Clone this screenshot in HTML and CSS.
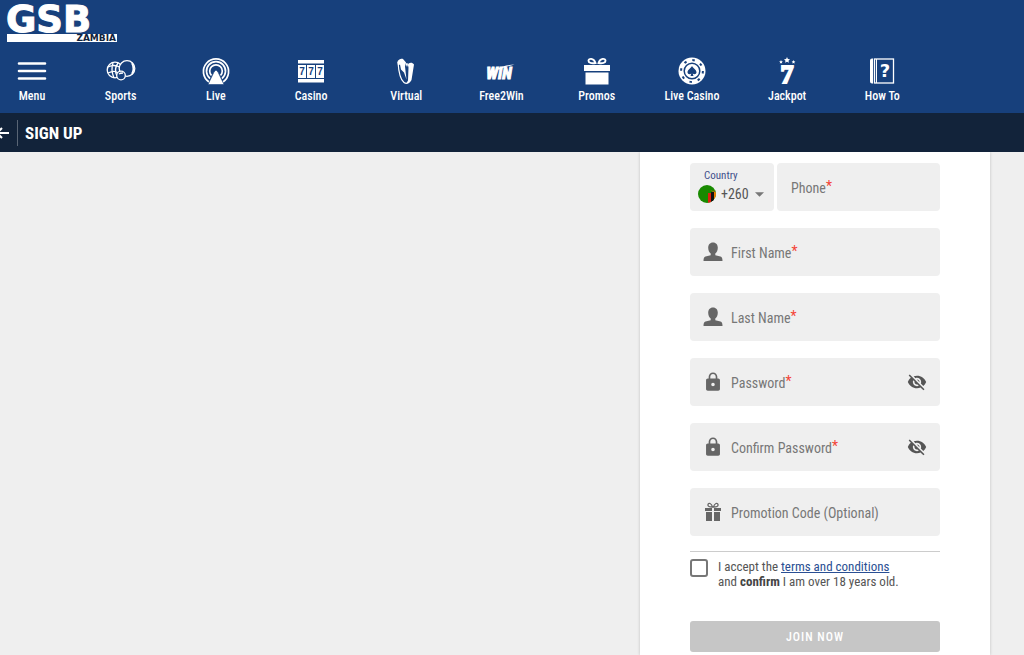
FILE: index.html
```
<!DOCTYPE html>
<html lang="en">
<head>
    <meta charset="UTF-8">
    <meta name="viewport" content="width=device-width, initial-scale=1.0">
    <title>GSB Zambia - Sign Up</title>
    <link rel="stylesheet" href="styles.css">
</head>
<body>
    <header class="header">
        <a class="logo" href="#" aria-label="GSB Zambia">
            <svg width="112" height="38" viewBox="0 0 112 38">
                <text class="logo-name" x="0" y="27">GSB</text>
                <rect x="1" y="29" width="110" height="8" fill="#fff"/>
                <text class="logo-country" x="110" y="36" text-anchor="end">ZAMBIA</text>
            </svg>
        </a>

        <nav class="nav">
            <a class="nav-item nav-menu" href="#">
                <svg class="nav-icon" viewBox="0 0 28 28">
                    <path d="M1 6.500h26M1 14h26M1 21.500h26" stroke="#fff" stroke-width="2.600" stroke-linecap="round"/>
                </svg>
                Menu
            </a>
            <a class="nav-item" href="#">
                <svg class="nav-icon" viewBox="0 0 28 28" fill="none" stroke="#fff" stroke-width="1.300">
                    <circle cx="8" cy="13" r="7.800"/>
                    <path d="M1 10c4-2 9-2 13 1M1 16c4-2 8-2 10 0M6 6c-2 5-1 10 1 15M11 6c-3 4-3 9-1 13"/>
                    <circle cx="20" cy="11.500" r="7.800" fill="#17407c"/>
                    <path d="M25 6c2 4 2 7 0 11" stroke-width="1.800"/>
                    <circle cx="14" cy="18.500" r="4.300" fill="#17407c"/>
                    <path d="M12 17c1-1 2-1 4-1"/>
                </svg>
                Sports
            </a>
            <a class="nav-item" href="#">
                <svg class="nav-icon" viewBox="0 0 28 28" fill="none" stroke="#fff" stroke-width="1.700">
                    <path d="M7 25a12.600 12.600 0 1 1 14 0"/>
                    <path d="M8 21.500a9.500 9.500 0 1 1 12 0"/>
                    <path d="M9.500 18.500a6.300 6.300 0 1 1 9 0"/>
                    <path d="M14 13l2 2 6 12.500H6L12 15z" fill="#fff" stroke="#17407c" stroke-width=".6"/>
                </svg>
                Live
            </a>
            <a class="nav-item" href="#">
                <svg class="nav-icon" viewBox="0 0 28 28" fill="#fff">
                    <rect x="1" y="3" width="26" height="3.500"/>
                    <rect x="1" y="8" width="8" height="13"/>
                    <rect x="10" y="8" width="8" height="13"/>
                    <rect x="19" y="8" width="8" height="13"/>
                    <rect x="1" y="22" width="26" height="3.500"/>
                    <g class="reel">
                        <text x="5" y="18">7</text>
                        <text x="14" y="18">7</text>
                        <text x="23" y="18">7</text>
                    </g>
                </svg>
                Casino
            </a>
            <a class="nav-item" href="#">
                <svg class="nav-icon" viewBox="0 0 28 28">
                    <path d="M5.500 5c0-2 4-4 5.500-3l3 3.500-1 4 1.500 13-2.500-7-3-3-1-5-2 1z" fill="#fff"/>
                    <path d="M6 5c.5 8 1.500 17 6 20.500 2 1.500 4 1 5.500-1" fill="none" stroke="#fff" stroke-width="1.200"/>
                    <path d="M13.500 6.500l2-.5 1 4.500-.5 13-1.500 2.500c2 .5 4-.5 5-3L22 7.500c-1.500-2-3.500-2-5.500-1L15 10z" fill="#fff"/>
                </svg>
                Virtual
            </a>
            <a class="nav-item" href="#">
                <svg class="nav-icon" viewBox="0 0 28 28">
                    <text class="win" x="12" y="22">WIN</text>
                    <path d="M9 12.500c6-3.500 11-4.500 18.500-5-5 1.500-10 2.500-15 5z" fill="#fff"/>
                </svg>
                Free2Win
            </a>
            <a class="nav-item" href="#">
                <svg class="nav-icon" viewBox="0 0 28 28">
                    <path d="M12.500 6c-4 .5-7 0-7-2.300s5-3.200 7 2.300zM15.500 6c4 .5 7 0 7-2.300s-5-3.200-7 2.300z" fill="none" stroke="#fff" stroke-width="1.900"/>
                    <path d="M1 8h26v6H1zM2.500 15.500h23V27.500h-23z" fill="#fff"/>
                </svg>
                Promos
            </a>
            <a class="nav-item" href="#">
                <svg class="nav-icon" viewBox="0 0 28 28">
                    <circle cx="14" cy="14" r="13.500" fill="#fff"/>
                    <circle cx="14" cy="14" r="10.900" fill="none" stroke="#17407c" stroke-width="2" stroke-dasharray="2.500 6.060"/>
                    <circle cx="14" cy="14" r="7.800" fill="none" stroke="#17407c" stroke-width="1.500"/>
                    <path d="M14 9c1 2 4.500 3.800 4.500 6.300 0 2-2.500 2.600-3.800 1.200l.8 2.500h-3l.8-2.500c-1.300 1.400-3.800.8-3.800-1.200C9.500 12.800 13 11 14 9z" fill="#17407c"/>
                </svg>
                Live Casino
            </a>
            <a class="nav-item" href="#">
                <svg class="nav-icon" viewBox="0 0 28 28" fill="#fff">
                    <path d="M14 0l.9 1.900 2.100.3-1.500 1.500.4 2.100-1.900-1-1.900 1 .4-2.100L11 2.200l2.100-.3z"/>
                    <path d="M8 3l.6 1.200 1.300.2-1 .9.300 1.300-1.200-.6-1.200.6.300-1.300-1-.9 1.300-.2zM20.500 3l.6 1.200 1.300.2-1 .9.300 1.300-1.200-.6-1.200.6.300-1.300-1-.9 1.300-.2z"/>
                    <text class="seven" x="14" y="26">7</text>
                </svg>
                Jackpot
            </a>
            <a class="nav-item" href="#">
                <svg class="nav-icon" viewBox="0 0 28 28">
                    <path d="M5 1.500H4A2 2 0 0 0 2 3.500v21a2 2 0 0 0 2 2h1z" fill="#fff"/>
                    <rect x="6.500" y="2" width="19" height="24" fill="none" stroke="#fff" stroke-width="1.300"/>
                    <path d="M8.500 2v24" stroke="#fff" stroke-width="1"/>
                    <text class="question" x="17" y="20">?</text>
                </svg>
                How To
            </a>
        </nav>
    </header>

    <div class="title-bar">
        <a class="back" href="#" aria-label="Back">
            <svg width="16" height="16" viewBox="0 0 16 16" fill="none" stroke="#fff" stroke-width="2">
                <path d="M16 8H4M9 3L4 8l5 5"/>
            </svg>
        </a>
        <h1>SIGN UP</h1>
    </div>

    <main class="main">
        <form class="card">
            <div class="phone-row">
                <div class="country">
                    <label for="country">Country</label>
                    <div class="country-value">
                        <svg class="flag" viewBox="0 0 18 18">
                            <clipPath id="round"><circle cx="9" cy="9" r="9"/></clipPath>
                            <g clip-path="url(#round)">
                                <path d="M0 0h18v18H0z" fill="#198a00"/>
                                <path d="M10 8h3v10h-3z" fill="#de2010"/>
                                <path d="M13 7h3v11h-3z" fill="#111"/>
                                <path d="M16 7h2v11h-2z" fill="#ef7d00"/>
                                <path d="M12 5l3 1 3-1v1l-3 1z" fill="#b86a10"/>
                            </g>
                        </svg>
                        <select id="country">
                            <option>+260</option>
                        </select>
                        <svg class="arrow" viewBox="0 0 10 5"><path d="M0 0h10L5 5z" fill="#777"/></svg>
                    </div>
                </div>
                <div class="field phone">
                    <input id="phone" type="tel" placeholder=" ">
                    <label for="phone">Phone<sup>*</sup></label>
                </div>
            </div>

            <div class="field">
                <svg class="field-icon" viewBox="0 0 20 20">
                    <path d="M10 .5c3.200 0 4.800 2.300 4.800 5.200 0 2.600-1 4.600-2.500 5.800v1.800l5.200 1.200c1.500.6 2 2 2 4.500H.5c0-2.500.5-3.900 2-4.500l5.200-1.200v-1.800C6.200 10.300 5.200 8.300 5.200 5.700 5.200 2.800 6.800.5 10 .5z" fill="#666"/>
                </svg>
                <input id="first-name" type="text" placeholder=" ">
                <label for="first-name">First Name<sup>*</sup></label>
            </div>

            <div class="field">
                <svg class="field-icon" viewBox="0 0 20 20">
                    <path d="M10 .5c3.200 0 4.800 2.300 4.800 5.200 0 2.600-1 4.600-2.500 5.800v1.800l5.200 1.200c1.500.6 2 2 2 4.500H.5c0-2.500.5-3.900 2-4.500l5.200-1.200v-1.800C6.200 10.300 5.200 8.300 5.200 5.700 5.200 2.800 6.800.5 10 .5z" fill="#666"/>
                </svg>
                <input id="last-name" type="text" placeholder=" ">
                <label for="last-name">Last Name<sup>*</sup></label>
            </div>

            <div class="field">
                <svg class="field-icon" viewBox="0.500 0.500 23 23">
                    <path d="M18 8h-1V6c0-2.760-2.240-5-5-5S7 3.240 7 6v2H6c-1.100 0-2 .9-2 2v10c0 1.100.9 2 2 2h12c1.100 0 2-.9 2-2V10c0-1.100-.9-2-2-2zm-6 9c-1.100 0-2-.9-2-2s.9-2 2-2 2 .9 2 2-.9 2-2 2zm3.100-9H8.900V6c0-1.710 1.390-3.100 3.100-3.100s3.100 1.390 3.100 3.100v2z" fill="#666"/>
                </svg>
                <input id="password" type="password" placeholder=" ">
                <label for="password">Password<sup>*</sup></label>
                <button class="toggle" type="button" aria-label="Show password">
                    <svg viewBox="0 0 24 24"><path d="M12 7c2.760 0 5 2.240 5 5 0 .65-.13 1.260-.36 1.830l2.920 2.920c1.510-1.260 2.700-2.890 3.430-4.750-1.730-4.390-6-7.500-11-7.500-1.400 0-2.740.25-3.980.7l2.160 2.160C10.740 7.130 11.350 7 12 7zM2 4.270l2.280 2.280.46.46C3.080 8.300 1.780 10.020 1 12c1.730 4.390 6 7.500 11 7.500 1.550 0 3.030-.3 4.380-.84l.42.42L19.730 22 21 20.730 3.270 3 2 4.270zM7.530 9.800l1.550 1.550c-.05.21-.08.43-.08.65 0 1.660 1.340 3 3 3 .22 0 .44-.03.65-.08l1.550 1.550c-.67.33-1.410.53-2.200.53-2.760 0-5-2.240-5-5 0-.79.2-1.530.53-2.200zm4.310-.78l3.150 3.150.02-.16c0-1.660-1.340-3-3-3l-.17.01z" fill="#555"/></svg>
                </button>
            </div>

            <div class="field">
                <svg class="field-icon" viewBox="0.500 0.500 23 23">
                    <path d="M18 8h-1V6c0-2.760-2.240-5-5-5S7 3.240 7 6v2H6c-1.100 0-2 .9-2 2v10c0 1.100.9 2 2 2h12c1.100 0 2-.9 2-2V10c0-1.100-.9-2-2-2zm-6 9c-1.100 0-2-.9-2-2s.9-2 2-2 2 .9 2 2-.9 2-2 2zm3.100-9H8.900V6c0-1.710 1.390-3.100 3.100-3.100s3.100 1.390 3.100 3.100v2z" fill="#666"/>
                </svg>
                <input id="confirm" type="password" placeholder=" ">
                <label for="confirm">Confirm Password<sup>*</sup></label>
                <button class="toggle" type="button" aria-label="Show password">
                    <svg viewBox="0 0 24 24"><path d="M12 7c2.760 0 5 2.240 5 5 0 .65-.13 1.260-.36 1.830l2.920 2.920c1.510-1.260 2.700-2.890 3.430-4.750-1.730-4.390-6-7.500-11-7.500-1.400 0-2.740.25-3.980.7l2.160 2.160C10.740 7.130 11.350 7 12 7zM2 4.270l2.280 2.280.46.46C3.080 8.300 1.780 10.020 1 12c1.730 4.390 6 7.500 11 7.500 1.550 0 3.030-.3 4.380-.84l.42.42L19.730 22 21 20.730 3.270 3 2 4.270zM7.530 9.800l1.550 1.550c-.05.21-.08.43-.08.65 0 1.660 1.340 3 3 3 .22 0 .44-.03.65-.08l1.550 1.550c-.67.33-1.410.53-2.200.53-2.760 0-5-2.240-5-5 0-.79.2-1.530.53-2.200zm4.310-.78l3.150 3.150.02-.16c0-1.660-1.340-3-3-3l-.17.01z" fill="#555"/></svg>
                </button>
            </div>

            <div class="field">
                <svg class="field-icon" viewBox="0 0 20 20" fill="#666">
                    <path d="M9.500 5C6.500 5 4.500 4.500 5 2.500S8.500 1 9.500 5zM10.500 5c3 0 5-.5 4.500-2.500S11.500 1 10.500 5z" fill="none" stroke="#666" stroke-width="1.300"/>
                    <path d="M2 6h7v3H2zM11 6h7v3h-7zM3 10h6v9H3zM11 10h6v9h-6z"/>
                </svg>
                <input id="promo" type="text" placeholder=" ">
                <label for="promo">Promotion Code (Optional)</label>
            </div>

            <div class="terms">
                <input id="accept" type="checkbox">
                <label for="accept">I accept the <a href="#">terms and conditions</a><br>and <strong>confirm</strong> I am over 18 years old.</label>
            </div>

            <button class="join" type="submit">JOIN NOW</button>
        </form>
    </main>
</body>
</html>
```
FILE: styles.css
```
* {
    box-sizing: border-box;
}
body {
    display: flex;
    flex-direction: column;
    min-height: 100vh;
    margin: 0;
    background-color: #efefef;
    color: #555;
    font-family: "Roboto Condensed", "Liberation Sans Narrow", Roboto, sans-serif;
    font-size: 14px;
}
input, select, button {
    font-family: inherit;
}
.header {
    background-color: #17407c;
    padding: 5px 0 9px;
}
.logo {
    display: block;
    width: 112px;
    height: 38px;
    margin-left: 6px;
}
.logo svg {
    display: block;
    overflow: visible;
}
.logo-name {
    font: bold 37px "DejaVu Sans", sans-serif;
    fill: #fff;
    stroke: #fff;
    stroke-width: 1px;
}
.logo-country {
    font: bold 9px "DejaVu Sans", sans-serif;
    fill: #12233a;
}
.nav {
    display: flex;
    padding-top: 14px;
}
.nav-item {
    display: flex;
    flex: 0 0 9.3%;
    flex-direction: column;
    align-items: center;
    gap: 2px;
    color: #fff;
    font-size: 12px;
    font-weight: 500;
    line-height: 18px;
    text-decoration: none;
    white-space: nowrap;
}
.nav-menu {
    flex-basis: 64px;
    margin-right: 9px;
}
.nav-icon {
    width: 28px;
    height: 28px;
    overflow: visible;
}
.header {
    padding-bottom: 8px;
}
.reel {
    font: bold 10px "Liberation Sans", sans-serif;
    fill: #17407c;
    text-anchor: middle;
}
.win {
    font: italic bold 16px "Roboto Condensed", sans-serif;
    fill: #fff;
    stroke: #fff;
    text-anchor: middle;
}
.seven {
    font: bold 26px "Liberation Serif", serif;
    stroke: #fff;
    stroke-width: 2px;
    text-anchor: middle;
}
.question {
    font: bold 18px "DejaVu Sans", sans-serif;
    fill: #fff;
    text-anchor: middle;
}
.title-bar {
    display: flex;
    align-items: center;
    height: 39px;
    background-color: #12233a;
    color: #fff;
}
.back {
    display: flex;
    align-items: center;
    width: 18px;
    height: 26px;
    margin-right: 7px;
    border-right: 1px solid #596575;
}
.back svg {
    margin-left: -7px;
}
.title-bar h1 {
    margin: 0;
    font-size: 17px;
    font-weight: bold;
}
.main {
    display: flex;
    flex: 1;
    justify-content: flex-end;
    padding-right: 34px;
}
.card {
    display: flex;
    flex-direction: column;
    gap: 17px;
    width: 350px;
    padding: 11px 50px 0;
    background-color: #fff;
    box-shadow: 0 0 3px rgba(0,0,0,0.2);
    clip-path: inset(0 -5px);
}
.phone-row {
    display: flex;
    gap: 3px;
}
.country {
    width: 84px;
    height: 48px;
    padding: 5px 8px;
    border-radius: 4px;
    background-color: #efefef;
}
.country label {
    display: block;
    padding-left: 6px;
    color: #3f4f8c;
    font-size: 11px;
    line-height: 15px;
}
.country-value {
    display: flex;
    align-items: center;
    height: 22px;
}
.flag {
    width: 18px;
    height: 18px;
    flex: none;
}
.country select {
    appearance: none;
    flex: 1;
    min-width: 0;
    padding: 0 0 0 5px;
    border: 0;
    background: none;
    color: #555;
    font-size: 14px;
}
.arrow {
    width: 9px;
    height: 5px;
    flex: none;
    margin-right: 2px;
}
.field {
    display: grid;
    grid-template-columns: 41px 1fr 46px;
    align-items: center;
    height: 48px;
    border-radius: 4px;
    background-color: #efefef;
}
.phone {
    flex: 1;
    grid-template-columns: 14px 1fr 8px;
}
.field-icon {
    grid-area: 1 / 1;
    justify-self: end;
    width: 20px;
    height: 20px;
    margin-right: 8px;
}
.field input {
    grid-area: 1 / 2;
    width: 100%;
    height: 48px;
    padding: 0;
    border: 0;
    outline: 0;
    background: none;
    color: #333;
    font-size: 14px;
}
.field label {
    grid-area: 1 / 2;
    padding-top: 2px;
    color: #777;
    line-height: 20px;
    white-space: nowrap;
    pointer-events: none;
}
.field input:not(:placeholder-shown) + label {
    visibility: hidden;
}
sup {
    color: #f44336;
    font-size: 14px;
    line-height: 0;
    vertical-align: 2px;
}
.toggle {
    grid-area: 1 / 3;
    justify-self: center;
    width: 20px;
    height: 20px;
    padding: 0;
    border: 0;
    background: none;
    cursor: pointer;
}
.toggle svg {
    display: block;
}
.terms {
    display: flex;
    align-items: flex-start;
    gap: 10px;
    margin-top: -2px;
    padding-top: 7px;
    border-top: 1px solid #ccc;
    font-size: 13px;
    line-height: 15px;
}
.terms input {
    appearance: none;
    flex: none;
    width: 18px;
    height: 18px;
    margin: 0;
    border: 2px solid #777;
    border-radius: 3px;
}
.terms input:checked {
    background-color: #17407c;
}
.terms a {
    color: #2a4f93;
}
.terms strong {
    color: #444;
}
.join {
    height: 31px;
    margin-top: 15px;
    border: 0;
    border-radius: 3px;
    background-color: #c6c6c6;
    color: #fff;
    font-size: 12px;
    font-weight: 500;
    letter-spacing: 1px;
}
```
